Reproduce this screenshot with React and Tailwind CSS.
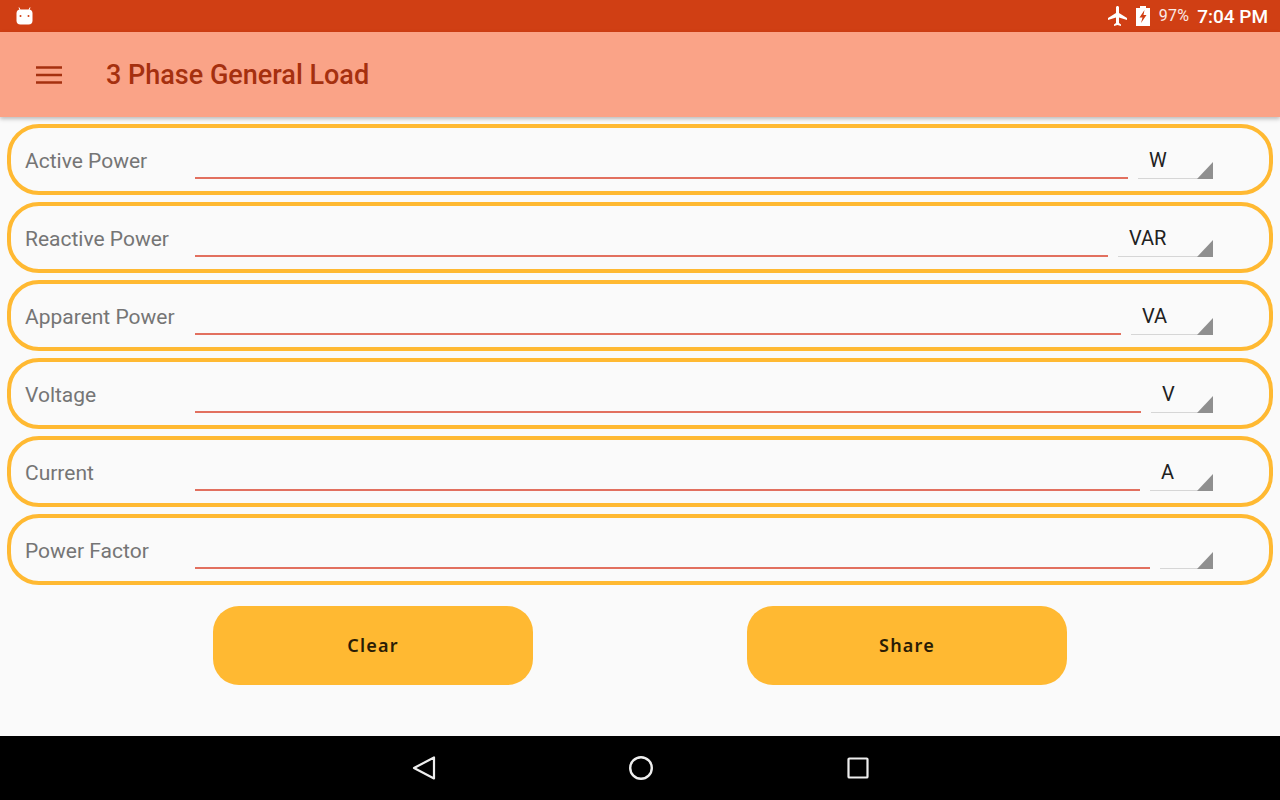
import React from "react";

const rows = [
  { label: "Active Power", unit: "W", w: "w-[75px]" },
  { label: "Reactive Power", unit: "VAR", w: "w-[95px]" },
  { label: "Apparent Power", unit: "VA", w: "w-[82px]" },
  { label: "Voltage", unit: "V", w: "w-[62px]" },
  { label: "Current", unit: "A", w: "w-[63px]" },
  { label: "Power Factor", unit: "", w: "w-[53px]" },
];

function Row({ label, unit, w }) {
  return (
    <div className="h-[71px] rounded-[32px] border-4 border-[#ffb932] flex items-stretch pl-[14px] pr-[56px]">
      <div className="w-[170px] shrink-0 pt-[20px] text-[21px] leading-[26px] text-[#757575]">{label}</div>
      <div className="flex-1 mb-[12px] border-b-2 border-[#e2705f]" />
      <div className={`relative ${w} shrink-0 ml-[10px] mb-[12px] border-b border-[#d6d6d6] pl-[11px] pt-[19px] text-[20px] leading-[26px] text-[#212121]`}>
        {unit}
        <svg className="absolute right-0 bottom-[-1px]" width="16" height="17" viewBox="0 0 16 17">
          <path d="M16 0V17H0Z" fill="#8f8f8f" />
        </svg>
      </div>
    </div>
  );
}

export default function App() {
  return (
    <div className="w-[1280px] h-[800px] flex flex-col overflow-hidden bg-[#fafafa] font-['Roboto',sans-serif]">
      <div className="h-[32px] shrink-0 bg-[#d03f14] flex items-center pl-[16px] pr-[12px] text-white">
        <svg width="17" height="18" viewBox="0 0 17 18">
          <path d="M4 3 3 0.5M13 3 14 0.5" stroke="#fff" strokeWidth="1" fill="none" />
          <rect x="0.5" y="2.5" width="16" height="15" rx="4" fill="#fff" />
          <circle cx="4.5" cy="9" r="1" fill="#d03f14" />
          <circle cx="12.5" cy="9" r="1" fill="#d03f14" />
        </svg>
        <div className="flex-1" />
        <svg width="24" height="24" viewBox="0 0 24 24" fill="#fff" className="mr-[6px]">
          <path d="M21 16v-2l-8-5V3.5C13 2.67 12.33 2 11.5 2S10 2.67 10 3.5V9l-8 5v2l8-2.5V19l-2 1.5V22l3.5-1 3.5 1v-1.5L13 19v-5.500l8 2.500z" />
        </svg>
        <svg width="14" height="20" viewBox="0 0 14 20" className="mr-[9px] mt-[-1px]">
          <path d="M4 0H10V2H14V20H0V2H4Z" fill="#fff" />
          <path d="M8.500 4 3.500 11.500H6.500L5 17 10.500 9H7.500Z" fill="#d03f14" />
        </svg>
        <span className="text-[16px] leading-none tracking-[0.2px] text-white/90 mr-[8px]">97%</span>
        <span className="text-[19px] leading-none font-medium">7:04 PM</span>
      </div>

      <div className="h-[85px] shrink-0 bg-[#faa387] flex items-center pl-[36px] shadow-[0_2px_4px_rgba(0,0,0,0.25)] z-10">
        <svg width="26" height="18" viewBox="0 0 26 18" className="mr-[44px]">
          <path d="M0 1.500H26M0 9H26M0 16.500H26" stroke="#a5300f" strokeWidth="2.600" />
        </svg>
        <span className="text-[27px] leading-none font-medium text-[#a5300f] pt-[1px]">3 Phase General Load</span>
      </div>

      <div className="flex-1 flex flex-col gap-[7px] pt-[7px] px-[7px]">
        {rows.map((r) => (
          <Row key={r.label} {...r} />
        ))}
        <div className="flex justify-center gap-[214px] mt-[14px]">
          {["Clear", "Share"].map((t) => (
            <div key={t} className="w-[320px] h-[79px] rounded-[26px] bg-[#ffb932] flex items-center justify-center font-['Noto_Sans',sans-serif] text-[18px] tracking-[1.2px] font-semibold text-[#2a1c05]">
              {t}
            </div>
          ))}
        </div>
      </div>

      <div className="h-[64px] shrink-0 bg-black flex items-center justify-center gap-[192px] pl-[1px]">
        <svg width="24" height="26" viewBox="0 0 24 26" fill="none" stroke="#eee" strokeWidth="2.200" strokeLinejoin="round">
          <path d="M22 2.500V23.500L2 13Z" />
        </svg>
        <svg width="26" height="26" viewBox="0 0 26 26" fill="none" stroke="#eee" strokeWidth="2.400">
          <circle cx="13" cy="13" r="10.800" />
        </svg>
        <svg width="24" height="24" viewBox="0 0 24 24" fill="none" stroke="#eee" strokeWidth="2.200" strokeLinejoin="round">
          <rect x="2.500" y="2.500" width="19" height="19" rx="0.800" />
        </svg>
      </div>
    </div>
  );
}
